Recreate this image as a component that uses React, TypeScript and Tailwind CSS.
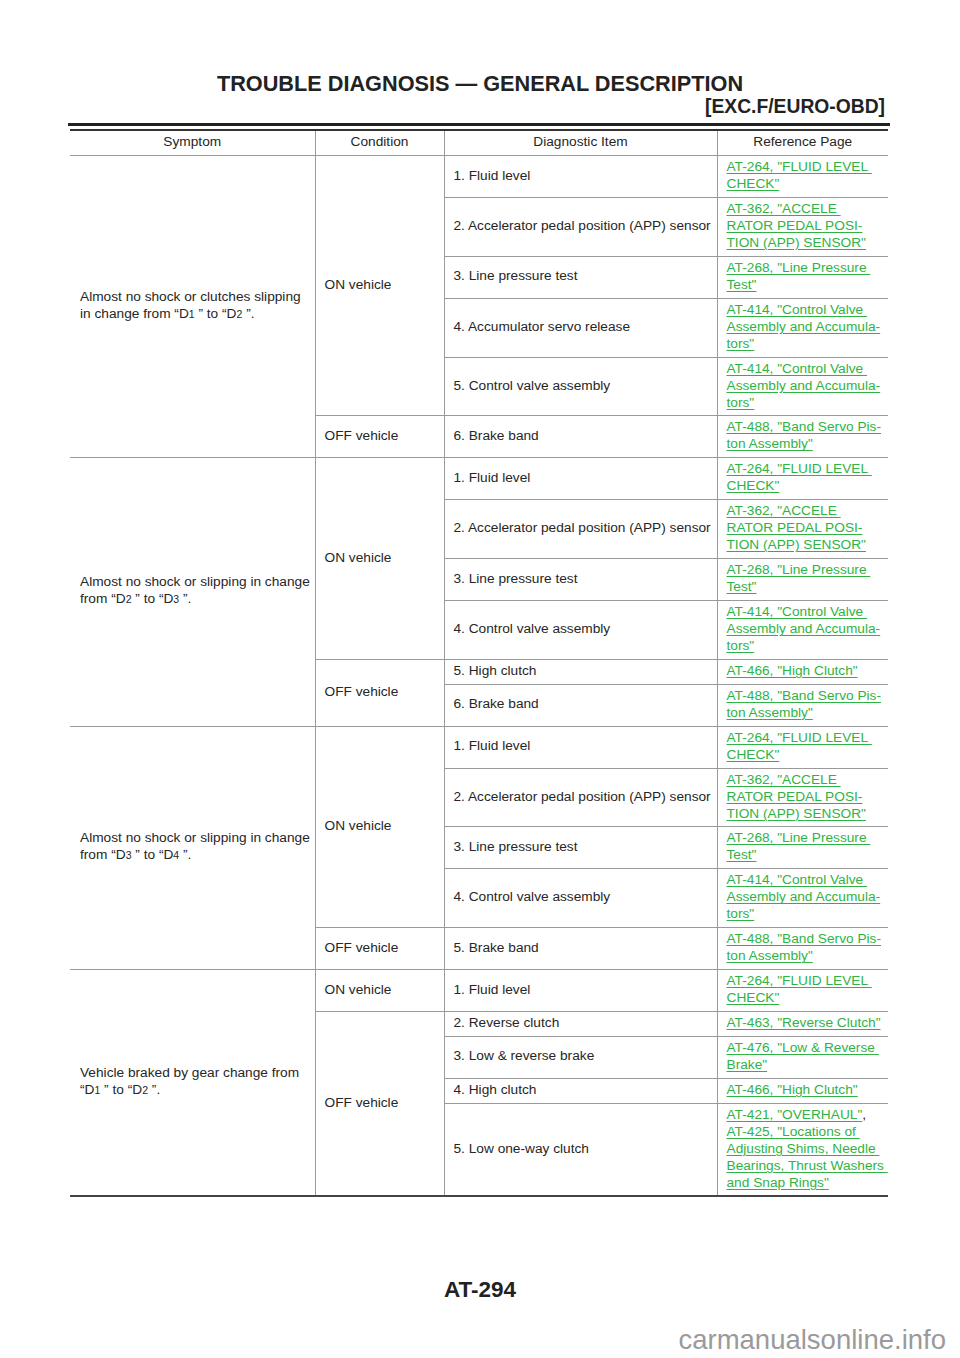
import React from "react";

const G = "text-[#2fb344] underline decoration-[1px] underline-offset-[2px]";

type L = React.ReactNode;

function Link({ lines }: { lines: string[] }) {
  return (
    <>
      {lines.map((l, i) => (
        <React.Fragment key={i}>
          <span className={G}>{l}</span>
          {i < lines.length - 1 && <br />}
        </React.Fragment>
      ))}
    </>
  );
}

const D = ({ n }: { n: string }) => (
  <>
    “D<span className="text-[10.5px]">{n}</span> ”
  </>
);

const FL = ["AT-264, \"FLUID LEVEL\u00a0", "CHECK\""];
const APP = ["AT-362, \"ACCELE\u00a0", "RATOR PEDAL POSI-", "TION (APP) SENSOR\""];
const LP = ["AT-268, \"Line Pressure\u00a0", "Test\""];
const CV = ["AT-414, \"Control Valve\u00a0", "Assembly and Accumula-", "tors\""];
const BS = ["AT-488, \"Band Servo Pis-", "ton Assembly\""];
const HC = ["AT-466, \"High Clutch\""];

type Row = {
  sym?: { span: number; node: L };
  cond?: { span: number; node: L };
  item: string;
  ref: L;
};

const rows: Row[] = [
  {
    sym: {
      span: 6,
      node: (
        <>
          Almost no shock or clutches slipping
          <br />
          in change from <D n="1" /> to <D n="2" />.
        </>
      ),
    },
    cond: { span: 5, node: "ON vehicle" },
    item: "1. Fluid level",
    ref: <Link lines={FL} />,
  },
  { item: "2. Accelerator pedal position (APP) sensor", ref: <Link lines={APP} /> },
  { item: "3. Line pressure test", ref: <Link lines={LP} /> },
  { item: "4. Accumulator servo release", ref: <Link lines={CV} /> },
  { item: "5. Control valve assembly", ref: <Link lines={CV} /> },
  { cond: { span: 1, node: "OFF vehicle" }, item: "6. Brake band", ref: <Link lines={BS} /> },
  {
    sym: {
      span: 6,
      node: (
        <>
          Almost no shock or slipping in change
          <br />
          from <D n="2" /> to <D n="3" />.
        </>
      ),
    },
    cond: { span: 4, node: "ON vehicle" },
    item: "1. Fluid level",
    ref: <Link lines={FL} />,
  },
  { item: "2. Accelerator pedal position (APP) sensor", ref: <Link lines={APP} /> },
  { item: "3. Line pressure test", ref: <Link lines={LP} /> },
  { item: "4. Control valve assembly", ref: <Link lines={CV} /> },
  { cond: { span: 2, node: "OFF vehicle" }, item: "5. High clutch", ref: <Link lines={HC} /> },
  { item: "6. Brake band", ref: <Link lines={BS} /> },
  {
    sym: {
      span: 5,
      node: (
        <>
          Almost no shock or slipping in change
          <br />
          from <D n="3" /> to <D n="4" />.
        </>
      ),
    },
    cond: { span: 4, node: "ON vehicle" },
    item: "1. Fluid level",
    ref: <Link lines={FL} />,
  },
  { item: "2. Accelerator pedal position (APP) sensor", ref: <Link lines={APP} /> },
  { item: "3. Line pressure test", ref: <Link lines={LP} /> },
  { item: "4. Control valve assembly", ref: <Link lines={CV} /> },
  { cond: { span: 1, node: "OFF vehicle" }, item: "5. Brake band", ref: <Link lines={BS} /> },
  {
    sym: {
      span: 5,
      node: (
        <>
          Vehicle braked by gear change from
          <br />
          <D n="1" /> to <D n="2" />.
        </>
      ),
    },
    cond: { span: 1, node: "ON vehicle" },
    item: "1. Fluid level",
    ref: <Link lines={FL} />,
  },
  {
    cond: { span: 4, node: "OFF vehicle" },
    item: "2. Reverse clutch",
    ref: <Link lines={["AT-463, \"Reverse Clutch\""]} />,
  },
  { item: "3. Low & reverse brake", ref: <Link lines={["AT-476, \"Low & Reverse\u00a0", "Brake\""]} /> },
  { item: "4. High clutch", ref: <Link lines={HC} /> },
  {
    item: "5. Low one-way clutch",
    ref: (
      <>
        <span className={G}>AT-421, "OVERHAUL"</span>,
        <br />
        <Link
          lines={[
            "AT-425, \"Locations of\u00a0",
            "Adjusting Shims, Needle\u00a0",
            "Bearings, Thrust Washers\u00a0",
            "and Snap Rings\"",
          ]}
        />
      </>
    ),
  },
];

export default function App() {
  const cell = "border border-[#9a9a9a] align-middle pt-[2px] pb-[4.9px] text-left";
  return (
    <div
      className="w-[960px] h-[1358px] bg-white relative text-[#262626]"
      style={{ fontFamily: '"Liberation Sans", Arial, sans-serif' }}
    >
      <div className="pt-[71px] text-center font-bold text-[21.7px] leading-[26px] text-[#222]">
        TROUBLE DIAGNOSIS — GENERAL DESCRIPTION
      </div>
      <div className="pr-[75px] text-right font-bold text-[19.3px] leading-[22px] text-[#222] -mt-[1px]">
        [EXC.F/EURO-OBD]
      </div>
      <div className="ml-[68px] w-[822px] h-[3px] bg-[#222] mt-[5px]" />
      <div className="ml-[70px] w-[818px] h-[2px] bg-[#333] mt-[3px]" />
      <table className="ml-[70px] w-[818px] border-collapse table-fixed text-[13.7px] leading-[17px] border-hidden">
        <colgroup>
          <col className="w-[245px]" />
          <col className="w-[129px]" />
          <col className="w-[273px]" />
          <col className="w-[171px]" />
        </colgroup>
        <thead>
          <tr>
            <th className="border border-[#9a9a9a] font-normal text-center pt-[2px] pb-[5px]">Symptom</th>
            <th className="border border-[#9a9a9a] font-normal text-center pt-[2px] pb-[5px]">Condition</th>
            <th className="border border-[#9a9a9a] font-normal text-center pt-[2px] pb-[5px]">Diagnostic Item</th>
            <th className="border border-[#9a9a9a] font-normal text-center pt-[2px] pb-[5px]">Reference Page</th>
          </tr>
        </thead>
        <tbody>
          {rows.map((r, i) => (
            <tr key={i}>
              {r.sym && (
                <td rowSpan={r.sym.span} className={`${cell} pl-[10px] pr-[2px]`}>
                  {r.sym.node}
                </td>
              )}
              {r.cond && (
                <td rowSpan={r.cond.span} className={`${cell} pl-[9px]`}>
                  {r.cond.node}
                </td>
              )}
              <td className={`${cell} pl-[9px] pr-[1px] whitespace-nowrap`}>{r.item}</td>
              <td className={`${cell} pl-[9px] pr-[0px] whitespace-nowrap`}>{r.ref}</td>
            </tr>
          ))}
        </tbody>
      </table>
      <div className="ml-[70px] w-[818px] h-[2px] bg-[#444] -mt-[1px]" />
      <div className="absolute left-0 right-0 top-[1277px] text-center font-bold text-[22.5px] leading-[26px] text-[#222]">
        AT-294
      </div>
      <div className="absolute right-[14px] top-[1324px] text-[27.5px] leading-[32px] text-[#9a9a9a]">
        carmanualsonline.info
      </div>
    </div>
  );
}
